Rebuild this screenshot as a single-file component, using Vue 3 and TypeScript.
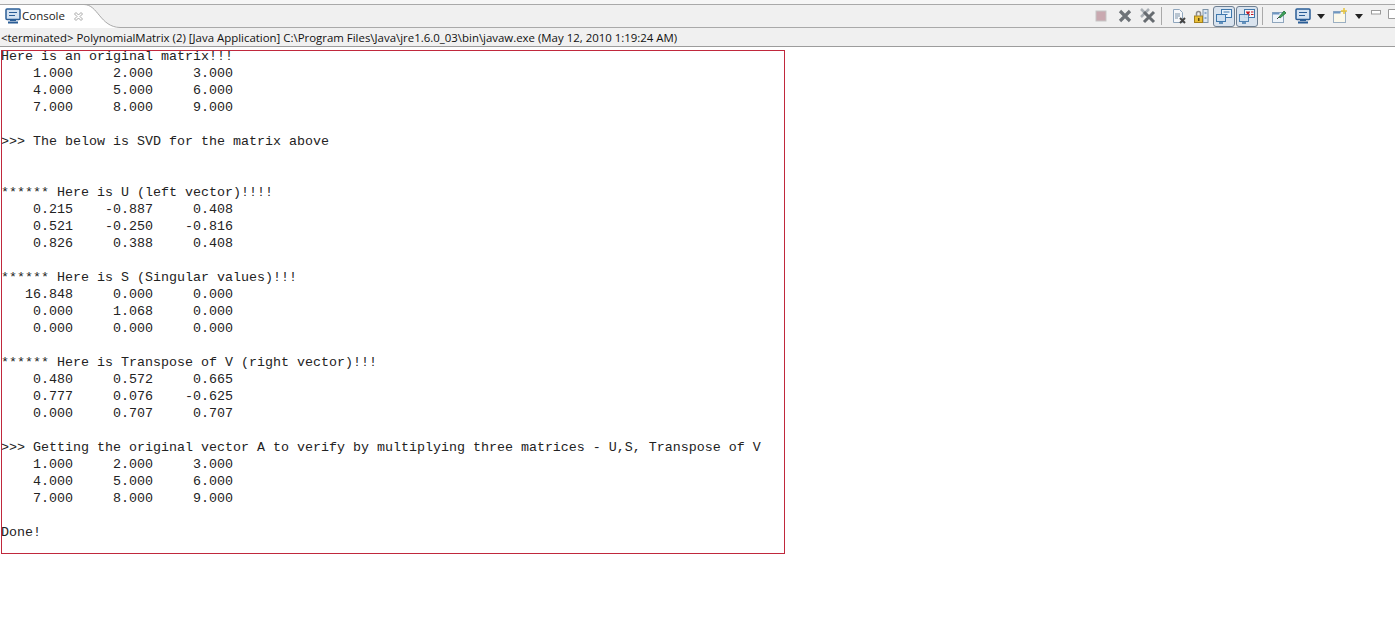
<script setup lang="ts">
const lines: string[] = [
  'Here is an original matrix!!!',
  '    1.000     2.000     3.000',
  '    4.000     5.000     6.000',
  '    7.000     8.000     9.000',
  '',
  '>>> The below is SVD for the matrix above',
  '',
  '',
  '****** Here is U (left vector)!!!!',
  '    0.215    -0.887     0.408',
  '    0.521    -0.250    -0.816',
  '    0.826     0.388     0.408',
  '',
  '****** Here is S (Singular values)!!!',
  '   16.848     0.000     0.000',
  '    0.000     1.068     0.000',
  '    0.000     0.000     0.000',
  '',
  '****** Here is Transpose of V (right vector)!!!',
  '    0.480     0.572     0.665',
  '    0.777     0.076    -0.625',
  '    0.000     0.707     0.707',
  '',
  '>>> Getting the original vector A to verify by multiplying three matrices - U,S, Transpose of V',
  '    1.000     2.000     3.000',
  '    4.000     5.000     6.000',
  '    7.000     8.000     9.000',
  '',
  'Done!',
]
</script>

<template>
  <div class="page">
    <header class="tabbar">
      <div class="tab">
        <svg class="tab-shape" width="125" height="28" viewBox="0 0 125 28">
          <path d="M0 5H84C98 5 100 27 120 27H125V28H0Z" fill="#fff" />
          <path d="M0 4.500H84C98 4.500 100 27 120 27.500H125" fill="none" stroke="#a9a9a9" />
        </svg>
        <svg class="tab-icon" width="16" height="16" viewBox="0 0 16 16">
          <rect x="1" y="1" width="14" height="10.500" rx="1" fill="#d5e3f2" stroke="#2a5d96" stroke-width="1.500" />
          <path d="M4 4.500h8M4 7.500h6" stroke="#2a5d96" stroke-width="1.200" />
          <path d="M5 12h6v1H5zM3 13.500h10V15.500H3z" fill="#2a5d96" />
        </svg>
        <span class="tab-title">Console</span>
        <svg class="tab-close" width="11" height="11" viewBox="0 0 11 11">
          <path d="M1.500 3L3 1.500 5.500 4 8 1.500 9.500 3 7 5.500 9.500 8 8 9.500 5.500 7 3 9.500 1.500 8 4 5.500Z" fill="#fff" stroke="#a8a8a8" />
        </svg>
      </div>
      <div class="tools">
        <svg width="12" height="12" viewBox="0 0 12 12"><rect x="1" y="1" width="10" height="10" fill="#c9a9b0" stroke="#c5c5c5" /></svg>
        <svg class="gap-x" width="14" height="14" viewBox="0 0 14 14"><path d="M2 2l10 10M12 2L2 12" stroke="#6e7378" stroke-width="3.200" /></svg>
        <svg class="gap-xx" width="16" height="16" viewBox="0 0 16 16"><path d="M1 1l8 8M9 1L1 9" stroke="#a9afb5" stroke-width="2.500" /><path d="M4 4l10 10M14 4L4 14" stroke="#666b70" stroke-width="3" /></svg>
        <span class="sep sep-l"></span>
        <svg class="gap-doc" width="16" height="16" viewBox="0 0 16 16"><path d="M2.500 1.500h6l3 3V14.500h-9z" fill="#f6f8fb" stroke="#8fa6bd" /><path d="M4 6h5M4 8h5M4 10h3" stroke="#7d93a8" /><path d="M9 10l5 5M14 10l-5 5" stroke="#444" stroke-width="2" /></svg>
        <svg class="gap-lock" width="16" height="16" viewBox="0 0 16 16"><rect x="10" y="1.500" width="5" height="13" fill="#dfe8f2" stroke="#7d93a8" /><path d="M11.500 5h2M11.500 10h2" stroke="#3b6ea8" /><rect x="1.500" y="8" width="8" height="6.500" fill="#e8bf3a" stroke="#a5811c" /><path d="M3.500 8V5.500a2 2 0 0 1 4 0V8" fill="none" stroke="#8b8b8b" stroke-width="1.500" /><rect x="5" y="10" width="1.500" height="3" fill="#5b4a10" /></svg>
        <span class="toggle toggle-a"><svg width="18" height="18" viewBox="0 0 18 18"><rect x="6.500" y="2.500" width="10" height="8" fill="#e9f2fa" stroke="#3f78ad" /><path d="M8.500 5h6M8.500 7.500h4" stroke="#3f78ad" /><rect x="1.500" y="7.500" width="9" height="7" fill="#cfe0f0" stroke="#3f78ad" /><path d="M4 16h4" stroke="#3f78ad" stroke-width="1.500" /></svg></span>
        <span class="toggle toggle-b"><svg width="18" height="18" viewBox="0 0 18 18"><rect x="6.500" y="2.500" width="10" height="8" fill="#f3f6fa" stroke="#3f78ad" /><path d="M8.500 4.500l3 4M11.500 4.500l-3 4" stroke="#c8141e" stroke-width="1.500" /><path d="M13 5h2.500M13 7.500h2.500" stroke="#c8141e" /><rect x="1.500" y="7.500" width="9" height="7" fill="#cfe0f0" stroke="#3f78ad" opacity=".9" /><path d="M4 16h4" stroke="#3f78ad" stroke-width="1.500" /></svg></span>
        <span class="sep sep-r"></span>
        <svg class="gap-pin" width="16" height="16" viewBox="0 0 16 16"><rect x="1.500" y="4.500" width="11" height="10" fill="#eef4fa" stroke="#8fa6bd" /><path d="M1.500 4.500h7v2h-7z" fill="#6f97c2" /><path d="M8 9l5-6 2 2-6 5z" fill="#3fa45a" stroke="#1e6d35" stroke-width=".8" /><path d="M8 9l-2 2" stroke="#444" /></svg>
        <svg class="gap-mon" width="16" height="16" viewBox="0 0 16 16"><rect x="1" y="1" width="14" height="10.500" rx="1" fill="#d5e3f2" stroke="#2a5d96" stroke-width="1.500" /><path d="M4 4.500h8M4 7.500h6" stroke="#2a5d96" stroke-width="1.200" /><path d="M5 12h6v1H5zM3 13.500h10V15.500H3z" fill="#2a5d96" /></svg>
        <svg class="gap-arrow" width="8" height="5" viewBox="0 0 8 5"><path d="M0 0h8L4 5z" fill="#222" /></svg>
        <svg class="gap-new" width="16" height="16" viewBox="0 0 16 16"><rect x="1.500" y="3.500" width="12" height="11" fill="#fbf8ea" stroke="#9bafc2" /><path d="M1.500 3.500h7v2h-7z" fill="#6f97c2" /><path d="M12 0v6M9 3h6" stroke="#e8c53a" stroke-width="1.500" /></svg>
        <svg class="gap-arrow2" width="8" height="5" viewBox="0 0 8 5"><path d="M0 0h8L4 5z" fill="#222" /></svg>
        <svg class="gap-min" width="10" height="5" viewBox="0 0 10 5"><rect x=".5" y=".5" width="9" height="3.500" fill="#fff" stroke="#9a9a9a" /></svg>
        <svg class="gap-max" width="9" height="10" viewBox="0 0 9 10"><path d="M9 .5H.5v9H9" fill="#fff" stroke="#9a9a9a" /></svg>
      </div>
    </header>
    <div class="desc">&lt;terminated&gt; PolynomialMatrix (2) [Java Application] C:\Program Files\Java\jre1.6.0_03\bin\javaw.exe (May 12, 2010 1:19:24 AM)</div>
    <main class="console">
      <div class="output"><pre class="text"><div v-for="(line, i) in lines" :key="i" class="line">{{ line }}</div></pre></div>
    </main>
  </div>
</template>

<style>
html, body { margin: 0; background: #fff; }
</style>

<style scoped>
.page {
  width: 1395px;
  height: 620px;
  overflow: hidden;
  background: #fff;
  display: flex;
  flex-direction: column;
}
.tabbar {
  height: 28px;
  flex: none;
  display: flex;
  justify-content: space-between;
  box-sizing: border-box;
  background: linear-gradient(#f6f6f6 0 4px, #a9a9a9 4px 5px, #f0f0f0 5px 27px, #a9a9a9 27px 28px);
}
.tab {
  position: relative;
  width: 125px;
  height: 28px;
  display: flex;
  align-items: center;
  padding: 4px 0 0 5px;
  box-sizing: border-box;
}
.tab-shape { position: absolute; left: 0; top: 0; }
.tab-icon { position: relative; }
.tab-title {
  position: relative;
  margin-left: 1px;
  font: 11.500px/16px "Open Sans", "Noto Sans", sans-serif;
  color: #222;
}
.tab-close { position: relative; margin-left: 8px; }
.tools {
  display: flex;
  align-items: center;
  flex: none;
  width: 300px;
  padding-top: 4px;
  height: 24px;
}
.gap-x { margin-left: 11px; }
.gap-xx { margin-left: 8px; }
.sep { width: 1px; height: 18px; background: #a9a9a9; flex: none; }
.sep-l { margin-left: 5px; }
.gap-doc { margin-left: 9px; }
.gap-lock { margin-left: 6px; }
.toggle {
  width: 22px;
  height: 21px;
  box-sizing: border-box;
  border: 1px solid #6d7f92;
  border-radius: 3px;
  background: #d9e3ee;
  display: flex;
  align-items: center;
  justify-content: center;
  flex: none;
}
.toggle-a { margin-left: 4px; }
.toggle-b { margin-left: 1px; }
.sep-r { margin-left: 4px; }
.gap-pin { margin-left: 8px; }
.gap-mon { margin-left: 8px; }
.gap-arrow { margin-left: 6px; }
.gap-new { margin-left: 7px; }
.gap-arrow2 { margin-left: 7px; }
.gap-min { margin: -8px 0 0 8px; }
.gap-max { margin: -5px 0 0 7px; }
.tools svg { flex: none; }
.desc {
  height: 19px;
  flex: none;
  box-sizing: border-box;
  background: #f0f0f0;
  border-bottom: 1px solid #9c9c9c;
  padding-left: 1px;
  font: 11.430px/19px "Open Sans", "Noto Sans", sans-serif;
  color: #111;
  white-space: pre;
}
.console { padding: 3px 0 0 1px; }
.output {
  width: 784px;
  height: 504px;
  box-sizing: border-box;
  border: 1px solid #c0283c;
}
.text {
  margin: -3px 0 0 -1px;
  font: 13.330px/17px "Liberation Mono", monospace;
  color: #222;
}
.line { height: 17px; white-space: pre; }
</style>
